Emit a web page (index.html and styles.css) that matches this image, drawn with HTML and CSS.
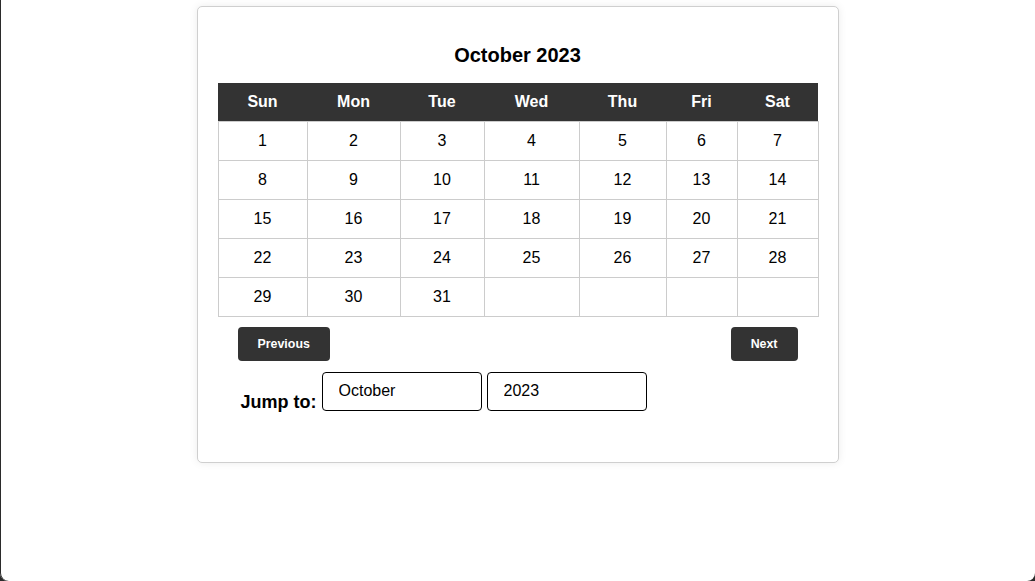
FILE: index.html
```html
<!DOCTYPE html>
<html lang="en">
<head>
<meta charset="utf-8">
<title>Calendar</title>
<link rel="stylesheet" href="styles.css">
</head>
<body>
<div class="calendar">
  <h2 class="title">October 2023</h2>
  <table class="grid">
    <thead>
      <tr>
        <th class="c-sun">Sun</th><th class="c-mon">Mon</th><th class="c-tue">Tue</th><th class="c-wed">Wed</th><th class="c-thu">Thu</th><th class="c-fri">Fri</th><th class="c-sat">Sat</th>
      </tr>
    </thead>
    <tbody>
      <tr><td>1</td><td>2</td><td>3</td><td>4</td><td>5</td><td>6</td><td>7</td></tr>
      <tr><td>8</td><td>9</td><td>10</td><td>11</td><td>12</td><td>13</td><td>14</td></tr>
      <tr><td>15</td><td>16</td><td>17</td><td>18</td><td>19</td><td>20</td><td>21</td></tr>
      <tr><td>22</td><td>23</td><td>24</td><td>25</td><td>26</td><td>27</td><td>28</td></tr>
      <tr><td>29</td><td>30</td><td>31</td><td></td><td></td><td></td><td></td></tr>
    </tbody>
  </table>
  <div class="nav">
    <button class="btn" type="button">Previous</button>
    <button class="btn" type="button">Next</button>
  </div>
  <div class="jump">
    <label class="jump-label">Jump to:</label>
    <input class="field" type="text" value="October">
    <input class="field" type="text" value="2023">
  </div>
</div>
</body>
</html>
```

FILE: styles.css
```css
html {
  background: #2b2b2b;
}
body {
  margin: 0;
  height: 581px;
  background: #ffffff;
  border-bottom-left-radius: 8px;
  border-bottom-right-radius: 8px;
  box-shadow: inset 1px 0 0 #2b2b2b;
  font-family: "Liberation Sans", Arial, sans-serif;
  color: #000;
  overflow: hidden;
}
.calendar {
  box-sizing: border-box;
  width: 642px;
  margin: 6px auto 0;
  padding: 20px 20px 51px;
  border: 1px solid #cfcfcf;
  border-radius: 5px;
  box-shadow: 0 0 8px rgba(0, 0, 0, 0.08);
  background: #fff;
}
.title {
  font-size: 20px;
  font-weight: bold;
  text-align: center;
  margin: 17px 0 16px;
  line-height: 23px;
}
.grid {
  width: 600px;
  border-collapse: collapse;
  table-layout: fixed;
}
.grid th {
  background: #333333;
  color: #fff;
  font-size: 16px;
  font-weight: bold;
  line-height: 18px;
  padding: 10px 0;
  border: none;
}
.grid td {
  border: 1px solid #cccccc;
  text-align: center;
  font-size: 16px;
  line-height: 18px;
  padding: 10px 0;
  height: 18px;
}
.c-sun { width: 89px; }
.c-mon { width: 93px; }
.c-tue { width: 84px; }
.c-wed { width: 95px; }
.c-thu { width: 87px; }
.c-fri { width: 71px; }
.c-sat { width: 81px; }
.nav {
  display: flex;
  justify-content: space-between;
  padding: 0 20px;
  margin-top: 10px;
}
.btn {
  font-family: "Liberation Sans", Arial, sans-serif;
  background: #333333;
  color: #fff;
  border: none;
  border-radius: 4px;
  font-size: 12.4px;
  font-weight: bold;
  line-height: 14px;
  height: 34px;
  padding: 0 20px;
}
.jump {
  display: flex;
  align-items: flex-end;
  padding: 0 20px;
  margin-top: 11px;
}
.jump-label {
  font-size: 18px;
  font-weight: bold;
  line-height: 20px;
  margin-left: 3px;
  margin-right: 5px;
  margin-bottom: -1px;
}
.field {
  box-sizing: border-box;
  width: 160px;
  height: 39px;
  margin-right: 5px;
  padding: 0 16px 2px;
  border: 1px solid #000;
  border-radius: 4px;
  font-family: "Liberation Sans", Arial, sans-serif;
  font-size: 16px;
  color: #000;
  background: #fff;
}
```
